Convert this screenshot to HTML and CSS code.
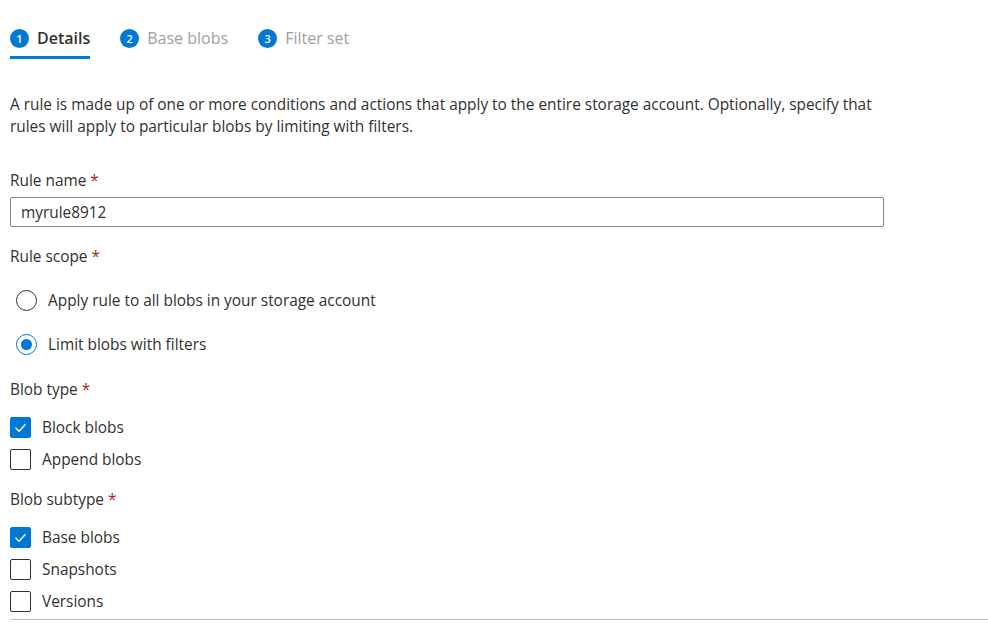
FILE: index.html
```html
<!DOCTYPE html>
<html lang="en">
<head>
<meta charset="utf-8">
<title>Add a rule</title>
<link rel="stylesheet" href="styles.css">
</head>
<body>
<div class="page">
  <nav class="tabs">
    <div class="tab active"><span class="num">1</span><span class="tab-label">Details</span></div>
    <div class="tab"><span class="num">2</span><span class="tab-label">Base blobs</span></div>
    <div class="tab"><span class="num">3</span><span class="tab-label">Filter set</span></div>
  </nav>

  <p class="intro">A rule is made up of one or more conditions and actions that apply to the entire storage account. Optionally, specify that rules will apply to particular blobs by limiting with filters.</p>

  <div class="label label-name">Rule name <span class="req">*</span></div>
  <div class="input">myrule8912</div>

  <div class="label label-scope">Rule scope <span class="req">*</span></div>
  <div class="radios">
    <div class="radio-row"><span class="radio"></span><span>Apply rule to all blobs in your storage account</span></div>
    <div class="radio-row"><span class="radio on"></span><span>Limit blobs with filters</span></div>
  </div>

  <div class="label label-type">Blob type <span class="req">*</span></div>
  <div class="checks">
    <div class="check-row"><span class="box on"><svg viewBox="0 0 21 21" width="21" height="21"><polyline points="5.5,10.8 9,14.2 15.5,7.2" fill="none" stroke="#fff" stroke-width="1.3"/></svg></span><span>Block blobs</span></div>
    <div class="check-row"><span class="box"></span><span>Append blobs</span></div>
  </div>

  <div class="label label-subtype">Blob subtype <span class="req">*</span></div>
  <div class="checks">
    <div class="check-row"><span class="box on"><svg viewBox="0 0 21 21" width="21" height="21"><polyline points="5.5,10.8 9,14.2 15.5,7.2" fill="none" stroke="#fff" stroke-width="1.3"/></svg></span><span>Base blobs</span></div>
    <div class="check-row"><span class="box"></span><span>Snapshots</span></div>
    <div class="check-row"><span class="box"></span><span>Versions</span></div>
  </div>

  <div class="divider"></div>
</div>
</body>
</html>
```

FILE: styles.css
```css
html, body {
  margin: 0;
  padding: 0;
  background: #ffffff;
}
body {
  font-family: "Open Sans", "Noto Sans", sans-serif;
  font-size: 15.4px;
  color: #323130;
}
.page {
  padding-left: 10px;
}
.tabs {
  display: flex;
  gap: 30px;
  padding-top: 29px;
}
.tab {
  display: flex;
  align-items: center;
  gap: 8px;
  height: 19px;
  padding-bottom: 8px;
  border-bottom: 3px solid transparent;
  color: #a19f9d;
  font-size: 16px;
}
.tab.active {
  border-bottom-color: #0078d4;
  color: #323130;
  font-weight: 600;
}
.num {
  width: 19px;
  height: 19px;
  border-radius: 50%;
  background: #0078d4;
  color: #fff;
  font-size: 11px;
  font-weight: 600;
  display: flex;
  align-items: center;
  justify-content: center;
  flex: none;
}
.tab-label {
  line-height: 18px;
  padding-bottom: 2px;
}
.intro {
  margin: 35px 0 0;
  line-height: 22px;
  width: 874px;
}
.label {
  line-height: 20px;
  padding-top: 1px;
}
.label-name {
  margin-top: 32px;
}
.label-scope {
  margin-top: 19px;
}
.label-type {
  margin-top: 25px;
}
.label-subtype {
  margin-top: 19px;
}
.req {
  color: #a4262c;
}
.input {
  margin-top: 6px;
  width: 874px;
  height: 30px;
  box-sizing: border-box;
  border: 1px solid #8a8886;
  border-radius: 2px;
  padding: 0 10px;
  display: flex;
  align-items: center;
}
.radios {
  margin-top: 23px;
  display: flex;
  flex-direction: column;
  gap: 24px;
}
.radio-row {
  display: flex;
  align-items: center;
  gap: 11px;
  height: 20px;
  padding-left: 6px;
}
.radio {
  width: 21px;
  height: 21px;
  box-sizing: border-box;
  border: 1px solid #323130;
  border-radius: 50%;
  flex: none;
  position: relative;
}
.radio.on {
  border-color: #0078d4;
}
.radio.on::after {
  content: "";
  position: absolute;
  left: 4px;
  top: 4px;
  width: 11px;
  height: 11px;
  border-radius: 50%;
  background: #0078d4;
}
.checks {
  margin-top: 17px;
  display: flex;
  flex-direction: column;
  gap: 11px;
}
.check-row {
  display: flex;
  align-items: center;
  gap: 11px;
  height: 21px;
}
.box {
  width: 21px;
  height: 21px;
  box-sizing: border-box;
  border: 1px solid #323130;
  border-radius: 2px;
  flex: none;
  display: block;
}
.box.on {
  background: #0078d4;
  border-color: #0078d4;
}
.box svg {
  display: block;
  margin: -1px;
}
.divider {
  margin-top: 7px;
  height: 1px;
  background: #c8c6c4;
}
```
